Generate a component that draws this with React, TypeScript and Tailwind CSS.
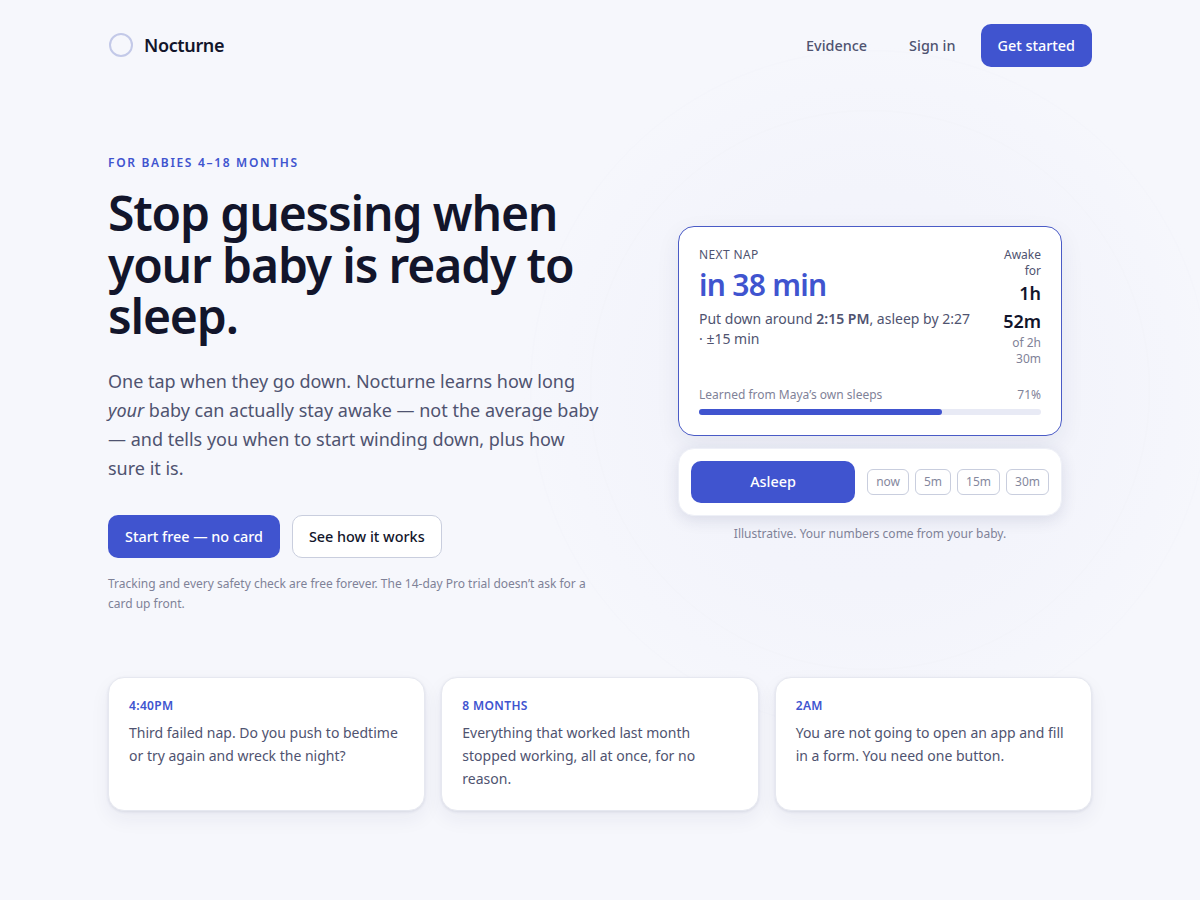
const problems = [
  { tag: '4:40PM', text: 'Third failed nap. Do you push to bedtime or try again and wreck the night?' },
  { tag: '8 MONTHS', text: 'Everything that worked last month stopped working, all at once, for no reason.' },
  { tag: '2AM', text: 'You are not going to open an app and fill in a form. You need one button.' },
];

const offsets = ['now', '5m', '15m', '30m'];

export default function App() {
  return (
    <div className="relative min-h-[900px] overflow-hidden bg-[#f6f7fc] font-['Noto_Sans',sans-serif] text-[#12152b]">
      {/* faint rings behind the hero card */}
      <div className="absolute left-[520px] top-[40px] h-[700px] w-[700px] rounded-full bg-[radial-gradient(circle,#f2f3fb_0%,#f3f4fb_40%,#f5f6fc_62%,#f6f7fc_70%)]" />
      <div className="absolute left-[590px] top-[110px] h-[560px] w-[560px] rounded-full border border-[#f3f4fa]" />
      <div className="absolute left-[530px] top-[50px] h-[680px] w-[680px] rounded-full border border-[#f4f5fb]" />

      <div className="relative mx-auto max-w-[984px]">
        <nav className="flex h-[91px] items-center justify-between">
          <div className="flex items-center gap-[11px] pb-px">
            <span className="ml-px h-6 w-6 rounded-full border-2 border-[#c3c9e8]" />
            <span className="text-lg font-semibold tracking-[-0.02em]">Nocturne</span>
          </div>
          <div className="flex items-center gap-[25px] text-[14.4px] font-medium text-[#4f5370]">
            <a className="mr-[17px]">Evidence</a>
            <a>Sign in</a>
            <button className="h-[43px] rounded-[10px] bg-[#4054cf] px-[17px] font-medium text-white">Get started</button>
          </div>
        </nav>

        <section className="grid grid-cols-[492px_444px] gap-12 pt-[63px]">
          <div>
            <p className="pt-px text-xs font-semibold tracking-[0.14em] text-[#4054cf]">FOR BABIES 4–18 MONTHS</p>
            <h1 className="mt-4 text-5xl leading-[51.5px] font-semibold tracking-[-0.024em]">
              Stop guessing when your baby is ready to sleep.
            </h1>
            <p className="mt-[25.5px] text-lg leading-[29px] text-[#4f5370]">
              One tap when they go down. Nocturne learns how long <em>your</em> baby can actually stay awake — not the
              average baby — and tells you when to start winding down, plus how sure it is.
            </p>
            <div className="mt-8 flex gap-3">
              <button className="h-[43px] rounded-[10px] bg-[#4054cf] px-[17px] text-[14.4px] font-medium text-white">
                Start free — no card
              </button>
              <button className="h-[43px] rounded-[10px] border border-[#c9cede] bg-white px-4 text-[14.4px] font-medium">
                See how it works
              </button>
            </div>
            <p className="mt-4 text-xs leading-5 text-[#7f8298]">
              Tracking and every safety check are free forever. The 14-day Pro trial doesn’t ask for a card up front.
            </p>
          </div>

          <div className="flex flex-col items-center pt-[72px]">
            <div className="w-[384px] rounded-2xl border border-[#4a5bc6] bg-white p-5 shadow-[0_8px_24px_rgba(30,40,90,0.07)]">
              <div className="flex justify-between gap-8">
                <div>
                  <p className="text-xs leading-4 tracking-[0.03em] text-[#4f5370]">NEXT NAP</p>
                  <p className="mt-1 text-3xl leading-9 font-semibold tracking-[-0.024em] text-[#4054cf]">in 38 min</p>
                  <p className="mt-[6px] text-sm leading-5 text-[#4f5370]">
                    Put down around <b className="font-semibold">2:15 PM</b>, asleep by 2:27 · ±15 min
                  </p>
                </div>
                <div className="w-[38px] shrink-0 text-right">
                  <p className="text-xs leading-4 text-[#4f5370]">Awake for</p>
                  <p className="text-lg leading-7 font-semibold text-[#12152b]">1h 52m</p>
                  <p className="text-xs leading-4 text-[#7f8298]">of 2h 30m</p>
                </div>
              </div>
              <div className="mt-5 flex justify-between text-xs leading-4 text-[#7f8298]">
                <span>Learned from Maya’s own sleeps</span>
                <span>71%</span>
              </div>
              <div className="mt-[6px] h-[6px] rounded-full bg-[#e8eaf5]">
                <div className="h-full w-[71%] rounded-full bg-[#4054cf]" />
              </div>
            </div>

            <div className="mt-3 flex w-[384px] items-center gap-3 rounded-2xl border border-[#eef0f7] bg-white p-3 shadow-[0_4px_16px_rgba(30,40,90,0.12)]">
              <button className="h-[42px] flex-1 rounded-[10px] bg-[#4054cf] text-[14.4px] font-medium text-white">
                Asleep
              </button>
              <div className="flex gap-[6px]">
                {offsets.map((o) => (
                  <button key={o} className="h-[26px] rounded-md border border-[#c9cede] px-2 text-xs text-[#85889e]">
                    {o}
                  </button>
                ))}
              </div>
            </div>
            <p className="mt-[10px] text-xs leading-4 text-[#7f8298]">Illustrative. Your numbers come from your baby.</p>
          </div>
        </section>

        <section className="mt-[63px] grid grid-cols-3 gap-4">
          {problems.map((p) => (
            <article
              key={p.tag}
              className="rounded-2xl border border-[#e6e8f0] bg-white px-5 pt-5 pb-5 shadow-[0_1px_3px_rgba(30,40,90,0.10),0_8px_20px_rgba(30,40,90,0.06)]"
            >
              <p className="text-xs leading-4 font-semibold tracking-[0.03em] text-[#4054cf]">{p.tag}</p>
              <p className="mt-[7px] text-sm leading-[23px] text-[#4f5370]">{p.text}</p>
            </article>
          ))}
        </section>
      </div>
    </div>
  );
}
